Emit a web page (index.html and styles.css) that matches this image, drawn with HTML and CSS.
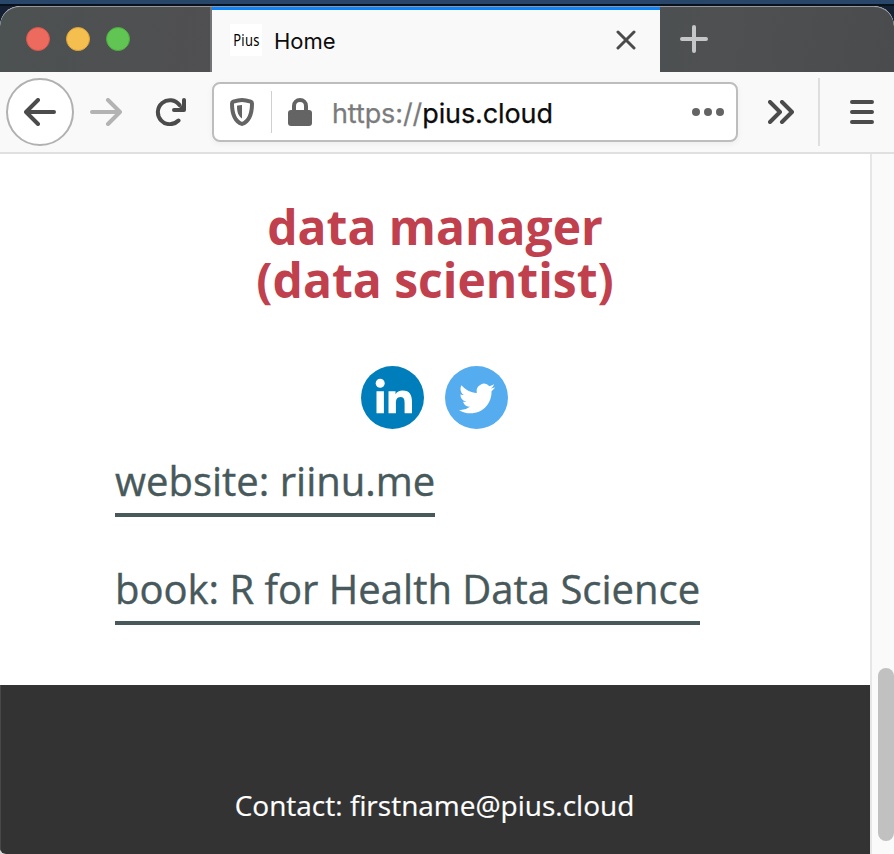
FILE: index.html
```html
<!DOCTYPE html>
<html lang="en">
<head>
<meta charset="utf-8">
<title>Home</title>
<link rel="stylesheet" href="styles.css">
</head>
<body>
<div class="desktop"></div>
<div class="window">
  <header class="tabs">
    <div class="lights"><i class="red"></i><i class="yellow"></i><i class="green"></i></div>
    <div class="tab">
      <span class="favicon"><span>Pius</span></span>
      <span class="tab-title">Home</span>
      <svg class="close" width="20" height="20" viewBox="0 0 20 20"><path d="M2 2l16 16M18 2L2 18"/></svg>
    </div>
    <svg class="plus" width="28" height="28" viewBox="0 0 28 28"><path d="M14 2v24M2 14h24"/></svg>
  </header>
  <nav class="toolbar">
    <span class="back"><svg width="32" height="28" viewBox="0 0 32 28"><path d="M30 14H3M14 2L2 14l12 12"/></svg></span>
    <svg class="forward" width="32" height="28" viewBox="0 0 32 28"><path d="M2 14h27M18 2l12 12-12 12"/></svg>
    <svg class="reload" width="32" height="28" viewBox="0 0 32 28"><path d="M23.500 22.500A12 12 0 1 1 24.500 7"/><path d="M29 2v10H19"/><path class="fill" d="M29 5v7h-7z"/></svg>
    <div class="url">
      <svg class="shield" width="24" height="28" viewBox="0 0 24 28"><path class="outline" d="M12 2c3 0 6 .8 8.700 1.700 .9.300 1.300.8 1.300 1.700 0 9.600-2 17.600-10 20.600C4 23 2 15 2 5.400c0-.9.400-1.400 1.300-1.700C6 2.800 9 2 12 2z"/><path class="half" d="M12 7v13.500C8.300 18 7 14 7 8.500c0-.7.200-.9.800-1C9.200 7.200 10.500 7 12 7z"/></svg>
      <span class="rule"></span>
      <svg class="lock" width="24" height="28" viewBox="0 0 24 28"><rect y="12" width="24" height="16" rx="3"/><path d="M6 14V8a6 6 0 0 1 12 0v6"/></svg>
      <span class="address"><span class="scheme">https://</span>pius.cloud</span>
      <svg class="dots" width="32" height="8" viewBox="0 0 32 8"><circle cx="4" cy="4" r="4"/><circle cx="16" cy="4" r="4"/><circle cx="28" cy="4" r="4"/></svg>
    </div>
    <svg class="more" width="28" height="24" viewBox="0 0 28 24"><path d="M2 2l10 10L2 22M14 2l10 10-10 10"/></svg>
    <span class="divider"></span>
    <svg class="menu" width="24" height="24" viewBox="0 0 24 24"><path d="M2 2h20M2 12h20M2 22h20"/></svg>
  </nav>
  <div class="viewport">
    <div class="page">
      <main>
        <h1>data manager<br>(data scientist)</h1>
        <div class="social">
          <svg width="63" height="63" viewBox="0 0 63 63"><circle cx="31.500" cy="31.500" r="31.500" fill="#007ebb"/><g fill="#fff"><circle cx="19.200" cy="17.300" r="4.500"/><path d="M15.500 25.300h7.400v22h-7.400zM27.500 25.300h7v3c1.500-2.500 3.800-3.700 7-3.700 7.500 0 9.500 4.700 9.500 11.600v11.100h-7.400V37.300c0-3.200-.2-6.400-4-6.400-3.900 0-4.700 3-4.700 6.200v10.200h-7.400z"/></g></svg>
          <svg width="63" height="63" viewBox="0 0 63 63"><circle cx="31.500" cy="31.500" r="31.500" fill="#55acee"/><path transform="translate(14 14.400) scale(1.510)" fill="#fff" d="M23.950 4.570a10 10 0 0 1-2.820.77 4.960 4.960 0 0 0 2.160-2.720c-.95.550-2 .95-3.130 1.180a4.920 4.920 0 0 0-8.380 4.480C7.690 8.090 4.070 6.130 1.640 3.160a4.820 4.820 0 0 0-.67 2.480c0 1.710.87 3.210 2.190 4.100a4.900 4.900 0 0 1-2.230-.62v.06a4.920 4.920 0 0 0 3.950 4.830 5 5 0 0 1-2.210.08 4.940 4.940 0 0 0 4.600 3.420A9.870 9.870 0 0 1 0 19.540a13.990 13.990 0 0 0 7.550 2.210c9.050 0 14-7.500 14-13.980 0-.21 0-.42-.02-.63a9.940 9.940 0 0 0 2.460-2.550z"/></svg>
        </div>
        <div class="links"><a>website: riinu.me</a><a>book: R for Health Data Science</a></div>
      </main>
      <footer>Contact: firstname@pius.cloud</footer>
    </div>
    <div class="scroll"><div class="thumb"></div></div>
  </div>
</div>
</body>
</html>
```
FILE: styles.css
```css
* { box-sizing: border-box; }
body { margin: 0; width: 894px; height: 854px; overflow: hidden; background: linear-gradient(#142034 50%, #d8d8d8 50%); }
svg { display: block; flex: none; fill: none; stroke: #4b4b4c; stroke-width: 4; stroke-linecap: round; stroke-linejoin: round; }
.desktop { height: 6px; background: #28456a; border-bottom: 2px solid #09111d; }
.window { height: 848px; overflow: hidden; border-radius: 20px 20px 0 6px; background: #f9f9fa; display: flex; flex-direction: column; }
.tabs { height: 66px; flex: none; display: flex; border-top: 1px solid #96979b; background: linear-gradient(100deg, #4c5152, #504f51 25%, #4b5053 60%, #4e5051 80%, #4a4b4c); border-radius: 20px 20px 0 0; }
.lights { width: 212px; padding: 20px 0 0 26px; display: flex; gap: 16px; border-right: 2px solid #737476; }
.lights i { width: 24px; height: 24px; border-radius: 50%; }
.red { background: #ed6a5e; border: 1px solid #d75549; }
.yellow { background: #f5bf4f; border: 1px solid #d9a13b; }
.green { background: #61c554; border: 1px solid #4dab3d; }
.tab { width: 448px; border-top: 3px solid #0a84ff; background: #f9f9fa; display: flex; padding: 14px 24px 0 18px; }
.favicon { width: 32px; height: 32px; background: #fff; color: #000; font: 17px/32px "Noto Sans", sans-serif; display: flex; justify-content: center; }
.favicon span { transform: scaleX(.76); letter-spacing: .4px; }
.tab-title { margin-left: 12px; font: 22px/34px Inter, sans-serif; color: #0c0c0d; flex: 1; }
.close { margin-top: 6px; stroke-width: 3; }
.plus { margin: 18px 0 0 20px; stroke: #c5c6c7; }
.toolbar { height: 82px; flex: none; display: flex; align-items: center; border-bottom: 2px solid #e0e0e1; padding-left: 6px; }
.back { width: 68px; height: 68px; border: 2px solid #b1b1b1; border-radius: 50%; background: #fff; display: flex; align-items: center; justify-content: center; }
.forward { margin-left: 16px; stroke: #b3b3b4; }
.reload { margin-left: 33px; }
.reload .fill { fill: #4b4b4c; stroke: none; }
.url { width: 526px; height: 60px; margin-left: 25px; border: 2px solid #bdbdbd; border-radius: 8px; background: #fff; box-shadow: 0 2px 6px #0000000d; display: flex; align-items: center; padding-left: 16px; }
.shield { stroke: #646465; }
.shield .half { fill: #646465; stroke: none; }
.rule { width: 1px; height: 42px; margin: 0 16px 0 17px; background: #d0d0d0; }
.lock { stroke: #646465; }
.lock rect { fill: #646465; stroke: none; }
.address { margin-left: 20px; font: 27px/34px Inter, sans-serif; letter-spacing: -.1px; color: #0c0c0d; width: 360px; padding-top: 4px; -webkit-text-stroke: .25px; }
.scheme { color: #7b7b7c; }
.dots circle { fill: #646465; stroke: none; }
.more { margin-left: 30px; }
.divider { width: 2px; height: 68px; margin: 0 30px 0 22px; background: #dfdfe0; }
.viewport { flex: 1; display: flex; min-height: 0; }
.page { width: 870px; display: flex; flex-direction: column; background: #fff; font-family: "Open Sans", sans-serif; }
main { height: 531px; padding-top: 46px; }
h1 { margin: 0; text-align: center; font-size: 48px; line-height: 53px; font-weight: 700; color: #c0404d; }
.social { display: flex; justify-content: center; gap: 21px; margin: 59.500px 1px 0 0; }
.social svg { stroke: none; }
.links { margin: 24.500px 0 0 115px; display: flex; flex-direction: column; align-items: flex-start; gap: 44px; }
.links a { height: 64px; border-bottom: 4px solid #48595c; font-size: 40px; line-height: 56px; color: #48595c; white-space: nowrap; -webkit-text-stroke: .4px; }
footer { flex: 1; background: #333; color: #fff; text-align: center; font-size: 28px; line-height: 38px; padding: 101px 2px 0 0; border-left: 1px solid #484848; -webkit-text-stroke: .2px; }
.scroll { width: 24px; background: #fafafa; border-left: 2px solid #e6e6e6; padding: 514px 0 0 6px; }
.thumb { width: 16px; height: 173px; border-radius: 8px; background: #c1c1c1; }
```
